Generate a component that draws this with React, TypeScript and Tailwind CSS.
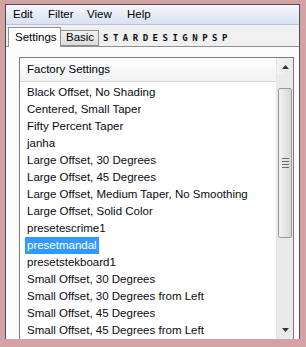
import React from "react";

const presets = [
  "Black Offset, No Shading",
  "Centered, Small Taper",
  "Fifty Percent Taper",
  "janha",
  "Large Offset, 30 Degrees",
  "Large Offset, 45 Degrees",
  "Large Offset, Medium Taper, No Smoothing",
  "Large Offset, Solid Color",
  "presetescrime1",
  "presetmandal",
  "presetstekboard1",
  "Small Offset, 30 Degrees",
  "Small Offset, 30 Degrees from Left",
  "Small Offset, 45 Degrees",
  "Small Offset, 45 Degrees from Left",
];

export default function App() {
  const selected = "presetmandal";

  return (
    <div
      className="w-[306px] h-[347px] overflow-hidden bg-[#d3a2a5] pt-[4px] pl-[5px] pr-[6px] pb-[8px]"
      style={{ fontFamily: '"Liberation Sans", Arial, sans-serif' }}
    >
      <div className="h-full flex flex-col border border-[#4d4d4d] border-b-0 bg-[#f0f0f0] overflow-hidden">
        {/* Menu bar */}
        <div className="h-[20px] shrink-0 flex items-center pl-[7px] bg-gradient-to-b from-[#f5f7fc] to-[#d9e1f2] border-b border-[#b8c3d8] text-[11.5px] text-black">
          <span className="w-[35px]">Edit</span>
          <span className="w-[39px]">Filter</span>
          <span className="w-[40px]">View</span>
          <span>Help</span>
        </div>

        {/* Tabs */}
        <div className="h-[21px] shrink-0 flex items-end pl-[2px]">
          <div className="h-[20px] w-[53px] pl-[6px] flex items-center bg-white border border-[#8e8f8f] border-b-0 text-[11.5px] text-black relative z-10 -mb-px">
            Settings
          </div>
          <div className="h-[16px] w-[38px] pl-[5px] flex items-center bg-gradient-to-b from-[#f2f2f2] to-[#dcdcdc] border border-[#8e8f8f] border-l-0 text-[11.5px] text-black">
            Basic
          </div>
          <span
            className="ml-[4px] mb-[3px] text-[9px] font-bold tracking-[4.5px] text-[#111] leading-none"
            style={{ fontFamily: '"DejaVu Sans Mono", monospace' }}
          >
            STARDESIGNPSP
          </span>
        </div>

        {/* Tab panel */}
        <div className="flex-1 min-h-0 bg-[#fcfcfc] border-t border-[#8e8f8f] pl-[13px] pr-[5px] pt-[10px]">
          <div className="h-[300px] border border-[#7a7a7a] bg-white flex">
            <div className="flex-1 min-w-0 overflow-hidden">
              <div className="h-[24px] flex items-center pl-[7px] bg-gradient-to-b from-white to-[#f1f2f4] border-b border-[#d5d5d5] text-[11.5px] text-black">
                Factory Settings
              </div>
              <div className="pt-[2px] pl-[5px]">
                {presets.map((p) => (
                  <div key={p} className="h-[17px] flex items-center">
                    <span
                      className={
                        p === selected
                          ? "h-[17px] flex items-center px-[2px] bg-[#3399ff] text-white text-[11.5px] whitespace-nowrap"
                          : "px-[2px] text-[11.5px] text-[#0a0a14] whitespace-nowrap"
                      }
                    >
                      {p}
                    </span>
                  </div>
                ))}
              </div>
            </div>

            {/* Scrollbar */}
            <div className="w-[17px] bg-[#eaeaea] border-l border-[#e6e6e6] flex flex-col">
              <div className="h-[17px] flex items-center justify-center bg-gradient-to-r from-[#f3f3f3] to-[#e9e9e9]">
                <svg width="7" height="4" viewBox="0 0 7 4">
                  <path d="M0 4 L3.5 0 L7 4 Z" fill="#333" />
                </svg>
              </div>
              <div className="mt-[13px] mx-[1px] h-[150px] rounded-[2px] border border-[#9a9a9a] bg-gradient-to-r from-[#f2f2f2] via-[#e6e6e6] to-[#d6d6d6] flex items-center justify-center">
                <div className="flex flex-col gap-[2px]">
                  <div className="w-[7px] h-px bg-[#6b6b6b]" />
                  <div className="w-[7px] h-px bg-[#6b6b6b]" />
                  <div className="w-[7px] h-px bg-[#6b6b6b]" />
                  <div className="w-[7px] h-px bg-[#6b6b6b]" />
                </div>
              </div>
              <div className="flex-1" />
              <div className="h-[17px] flex items-center justify-center mb-[18px]">
                <svg width="7" height="4" viewBox="0 0 7 4">
                  <path d="M0 0 L3.5 4 L7 0 Z" fill="#333" />
                </svg>
              </div>
            </div>
          </div>
        </div>
      </div>
    </div>
  );
}
